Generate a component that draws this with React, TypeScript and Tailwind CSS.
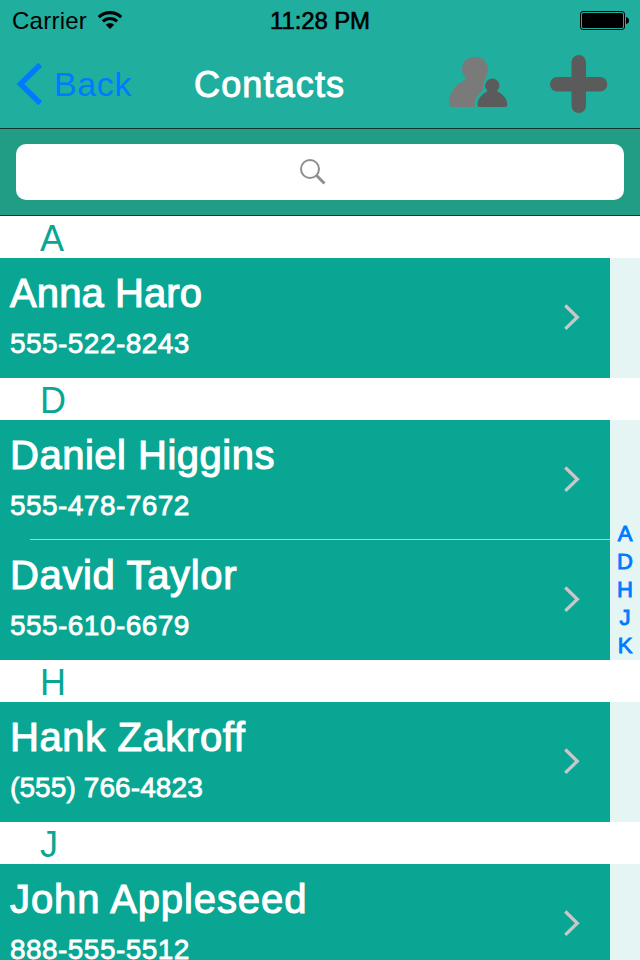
type Contact = { name: string; phone: string; nameSpacing: string; phoneSpacing: string };
type Section = { letter: string; contacts: Contact[] };

const sections: Section[] = [
  {
    letter: "A",
    contacts: [
      { name: "Anna Haro", phone: "555-522-8243", nameSpacing: "tracking-[0.1px]", phoneSpacing: "tracking-[0.45px]" },
    ],
  },
  {
    letter: "D",
    contacts: [
      { name: "Daniel Higgins", phone: "555-478-7672", nameSpacing: "tracking-[0.5px]", phoneSpacing: "tracking-[0.45px]" },
      { name: "David Taylor", phone: "555-610-6679", nameSpacing: "tracking-[0.65px]", phoneSpacing: "tracking-[0.45px]" },
    ],
  },
  {
    letter: "H",
    contacts: [
      { name: "Hank Zakroff", phone: "(555) 766-4823", nameSpacing: "tracking-[0.6px]", phoneSpacing: "tracking-[0.1px]" },
    ],
  },
  {
    letter: "J",
    contacts: [
      { name: "John Appleseed", phone: "888-555-5512", nameSpacing: "tracking-[0.9px]", phoneSpacing: "tracking-[0.45px]" },
    ],
  },
];

function StatusBar() {
  return (
    <div className="grid h-10 grid-cols-3 items-center text-[24px] leading-[38px] text-black">
      <div className="flex items-center pl-3">
        <span className="pt-[2px] tracking-[0.25px]">Carrier</span>
        <svg className="ml-[10px]" width="26" height="20" viewBox="0 0 26 20" fill="none" stroke="#000">
          <path d="M1.800 7.200a16 16 0 0 1 22.400 0" strokeWidth="3.100" />
          <path d="M5.900 11.400a10 10 0 0 1 14.200 0" strokeWidth="3" />
          <path d="M13 19l-4.200-4.300a6 6 0 0 1 8.400 0z" fill="#000" stroke="none" />
        </svg>
      </div>
      <div className="pt-[2px] text-center tracking-[-0.15px] [-webkit-text-stroke:0.6px_#000]">11:28 PM</div>
      <div className="flex justify-end pr-[10px]">
        <svg width="50" height="20" viewBox="0 0 50 20">
          <rect x="0.500" y="1.500" width="44" height="18" rx="2.500" fill="none" stroke="#000" />
          <rect x="2" y="3" width="41" height="15" rx="1.500" fill="#000" />
          <path d="M46 7q3 .5 3 3.500t-3 3.500z" fill="#000" />
        </svg>
      </div>
    </div>
  );
}

function NavBar() {
  return (
    <div className="flex h-[88px] items-center">
      <button className="flex w-[194px] items-center pl-4 text-[#007aff]">
        <svg width="27" height="44" viewBox="0 0 27 44" fill="none" stroke="#007aff" strokeWidth="5.400">
          <path d="M24.200 2.800L4.400 22L24.200 41.200" />
        </svg>
        <span className="ml-[11px] text-[34px] leading-[40px] tracking-[0.6px]">Back</span>
      </button>
      <h1 className="w-[254px] pt-[2px] text-[36px] leading-[40px] font-normal tracking-[1.15px] text-white [-webkit-text-stroke:1px_#fff]">
        Contacts
      </h1>
      <svg width="60" height="58" viewBox="448 55 60 58">
        <path
          d="M475 56.700C482.500 56.700 488 62 488 69.500C488 74.500 485 77.500 484.500 80.500C483 83 483.500 87 483 90C478 94 475.500 99 474.500 103L475 107H453C450 107 449 105.500 449 103C449 92 456 84 465.500 80C467.500 78.500 462 75 462 69.500C462 62 467.500 56.700 475 56.700Z"
          fill="#7a7a7a"
        />
        <path
          d="M492.300 78.500A7.200 7.200 0 0 1 499.500 85.800C499.500 88.700 497 89.800 497.300 91.500C503.500 94 507.300 99.500 507.300 104.500C507.300 106.200 506.700 107 505 107H479.600C478 107 477.500 106.200 477.500 104.500C477.500 99.500 481.400 94 487.300 91.500C487.600 89.800 485.100 88.700 485.100 85.800A7.200 7.200 0 0 1 492.300 78.500Z"
          fill="#5b5b5b"
        />
      </svg>
      <svg className="ml-[41px]" width="60" height="60" viewBox="549 54 60 60" fill="#5b5b5b">
        <rect x="571.500" y="55" width="14.500" height="58" rx="7.250" />
        <rect x="550" y="77" width="57.300" height="14.500" rx="7.250" />
      </svg>
    </div>
  );
}

function SearchBar() {
  return (
    <div className="h-[88px] border-t border-b border-[#14352f] bg-[#219d85] px-4 pt-[15px]">
      <div className="flex h-14 items-center justify-center rounded-[10px] bg-white">
        <svg className="mr-[14px]" width="28" height="28" viewBox="0 0 28 28" fill="none" stroke="#8e8e93">
          <circle cx="11" cy="11" r="9" strokeWidth="2" />
          <path d="M17.300 17.300L25.500 25.500" strokeWidth="3" />
        </svg>
      </div>
    </div>
  );
}

function ContactRow({ contact, divided }: { contact: Contact; divided: boolean }) {
  return (
    <div className="flex h-[120px] flex-col bg-[#09a793]">
      <div className="flex flex-1 items-center justify-between pr-[29px] pl-[10px] text-white">
        <div className="flex h-[119px] flex-col gap-[6px] pt-[10px] whitespace-nowrap">
          <div className={`text-[40px] leading-[50px] [-webkit-text-stroke:1.1px_#fff] ${contact.nameSpacing}`}>
            {contact.name}
          </div>
          <div className={`text-[28px] leading-[40px] [-webkit-text-stroke:0.8px_#fff] ${contact.phoneSpacing}`}>
            {contact.phone}
          </div>
        </div>
        <svg width="18" height="28" viewBox="0 0 18 28" fill="none" stroke="#c7c7cc" strokeWidth="3.300">
          <path d="M2.300 1.500L14.300 13.200L2.300 24.900" />
        </svg>
      </div>
      <div className={divided ? "ml-[30px] h-px bg-[#a5d5cf]" : "h-px"} />
    </div>
  );
}

export default function App() {
  return (
    <div className="relative h-[960px] w-[640px] overflow-hidden bg-white font-['Liberation_Sans',Arial,sans-serif]">
      <header className="bg-[#20af9f]">
        <StatusBar />
        <NavBar />
        <SearchBar />
      </header>
      <main>
        {sections.map((section) => (
          <section key={section.letter}>
            <h2 className="h-[42px] pl-10 text-[36px] leading-[45px] font-normal text-[#09a793]">{section.letter}</h2>
            <div className="bg-[#e5f5f3] pr-[30px]">
              {section.contacts.map((contact, i) => (
                <ContactRow key={contact.name} contact={contact} divided={i < section.contacts.length - 1} />
              ))}
            </div>
          </section>
        ))}
      </main>
      <nav className="absolute top-[520px] right-0 flex w-[30px] flex-col text-center text-[22px] leading-[28px] text-[#007aff] [-webkit-text-stroke:0.9px_#007aff]">
        {["A", "D", "H", "J", "K"].map((letter) => (
          <span key={letter}>{letter}</span>
        ))}
      </nav>
    </div>
  );
}
